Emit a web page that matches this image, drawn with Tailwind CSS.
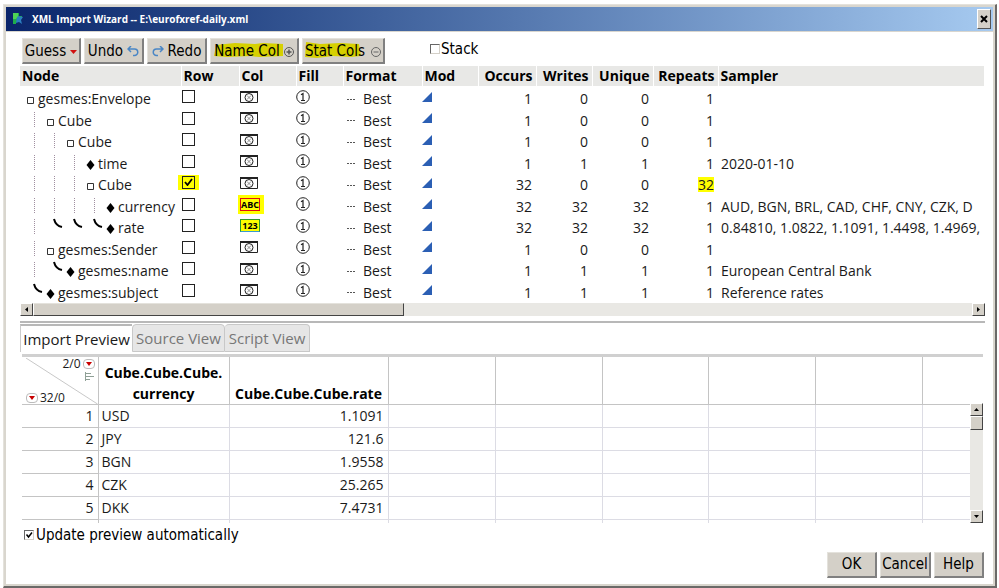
<!DOCTYPE html>
<html lang="en">

<head>
    <meta charset="UTF-8">
    <meta name="viewport" content="width=device-width, initial-scale=1.0">
    <title>XML Import Wizard</title>
    <script src="https://cdn.jsdelivr.net/npm/@tailwindcss/browser@4"></script>
</head>

<body class="bg-white pt-1 pl-[3px] pr-0.5 font-['Open_Sans','Noto_Sans',sans-serif] text-[14px] text-[#1a1a1a]">
    <div class="border-t border-l border-t-[#e4e2dc] border-l-[#e4e2dc] border-r-2 border-b-2 border-r-[#6b6a68] border-b-[#6b6a68]">
        <div class="border-2 border-[#d9d6ce]">
            <header class="h-[25px] flex items-center pl-1.5 pr-0.5 bg-linear-to-r from-[#0a246a] to-[#a6caf0] border-b border-[#d9d6ce]">
                <svg class="w-3 h-4" viewBox="0 0 12 16">
                    <path d="M1 2h6v3h3v3H7v3H4v2H1z" fill="#1fae4b" />
                    <path d="M5 5l6 1-2 3 1 4-3-2-3 1z" fill="#2b7fc0" />
                    <path d="M1 2h5v3l-2 3H1z" fill="#4fd455" />
                </svg>
                <h1 class="ml-2 flex-1 font-bold text-[10px] text-white">XML Import Wizard -- E:\eurofxref-daily.xml</h1>
                <button aria-label="Close" class="w-3.5 h-5 grid place-items-center bg-[#d4d0c8] border border-t-white border-l-white border-r-[#555] border-b-[#555]">
                    <svg class="w-2 h-2" viewBox="0 0 8 8"><path d="M1 1l6 6M7 1l-6 6" stroke="#000" stroke-width="2" /></svg>
                </button>
            </header>

            <main class="pl-3.5 pr-2 pb-1.5">
                <!-- toolbar -->
                <div class="flex items-center gap-[3px] pt-1.5 pl-0.5 font-['DejaVu_Sans_Condensed','DejaVu_Sans',sans-serif] text-[15px] text-black">
                    <button class="w-[59px] h-[26px] pt-0.5 flex items-center justify-center gap-1 whitespace-nowrap bg-[#d4d0c8] border border-t-[#e4e2dc] border-l-[#e4e2dc] border-r-2 border-b-2 border-r-[#808080] border-b-[#808080]">Guess
                        <svg class="w-[7px] h-1" viewBox="0 0 7 4"><path d="M0 0h7L3.5 4z" fill="#d01010" /></svg>
                    </button>
                    <button class="w-[60px] h-[26px] pt-0.5 flex items-center justify-center gap-1 whitespace-nowrap bg-[#d4d0c8] border border-t-[#e4e2dc] border-l-[#e4e2dc] border-r-2 border-b-2 border-r-[#808080] border-b-[#808080]">Undo
                        <svg class="w-3 h-3" viewBox="0 0 12 12" fill="none" stroke="#4a86c5" stroke-width="1.5"><path d="M4 0L1 3l3 3M1 3h6.500a3 3 0 0 1 0 6.500H6" /></svg>
                    </button>
                    <button class="w-[60px] h-[26px] pt-0.5 flex items-center justify-center gap-1 whitespace-nowrap bg-[#d4d0c8] border border-t-[#e4e2dc] border-l-[#e4e2dc] border-r-2 border-b-2 border-r-[#808080] border-b-[#808080]">
                        <svg class="w-3 h-3" viewBox="0 0 12 12" fill="none" stroke="#4a86c5" stroke-width="1.5"><path d="M8 0l3 3-3 3M11 3H4.500a3 3 0 0 0 0 6.500H6" /></svg>
                        Redo</button>
                    <button class="w-[89px] h-[26px] pt-0.5 relative flex items-center justify-center gap-1 whitespace-nowrap bg-[#d4d0c8] border border-t-[#e4e2dc] border-l-[#e4e2dc] border-r-2 border-b-2 border-r-[#808080] border-b-[#808080]">
                        <svg class="absolute left-0.5 top-[3px] w-[72px] h-4" viewBox="0 0 72 16"><path d="M3 3L22 1l20 1 8-1 20 1 0 12-24 1-8-1-24 1-13-1z" fill="#d6d000" /></svg>
                        <span class="relative">Name Col</span>
                        <svg class="w-2.5 h-2.5" viewBox="0 0 10 10" fill="none" stroke="#555"><circle cx="5" cy="5" r="4.500" /><path d="M2.500 5h5M5 2.500v5" stroke-width="1.500" /></svg>
                    </button>
                    <button class="w-[83px] h-[26px] pt-0.5 relative flex items-center justify-center gap-1.5 whitespace-nowrap bg-[#d4d0c8] border border-t-[#e4e2dc] border-l-[#e4e2dc] border-r-2 border-b-2 border-r-[#808080] border-b-[#808080]">
                        <svg class="absolute left-0.5 top-0.5 w-[60px] h-[18px]" viewBox="0 0 60 18"><path d="M1 1l14 2 20-1 19 1 2 12-10 1-18-1-16 2L0 16z" fill="#d6d000" /></svg>
                        <span class="relative">Stat Cols</span>
                        <svg class="w-2.5 h-2.5" viewBox="0 0 10 10" fill="none" stroke="#666"><circle cx="5" cy="5" r="4.500" /><path d="M2.500 5h5" /></svg>
                    </button>
                    <label class="ml-[42px] flex items-center gap-px -mt-1">
                        <input type="checkbox" class="appearance-none w-2.5 h-2.5 bg-white border border-t-[#666] border-l-[#666] border-r-[#d4d0c8] border-b-[#d4d0c8]">Stack
                    </label>
                </div>

                <!-- node tree -->
                <div class="mt-0.5 overflow-hidden">
                    <table class="w-full table-fixed border-collapse whitespace-nowrap">
                        <colgroup>
                            <col class="w-[161px]">
                            <col class="w-[58px]">
                            <col class="w-[57px]">
                            <col class="w-[47px]">
                            <col class="w-[79px]">
                            <col class="w-[56px]">
                            <col class="w-[58px]">
                            <col class="w-[56px]">
                            <col class="w-[61px]">
                            <col class="w-[65px]">
                            <col>
                        </colgroup>
                        <thead>
                            <tr class="h-5 bg-[#e8e8e6] text-black text-left leading-5 *:border-r *:border-white *:p-0 *:pl-0.5 *:pr-[3px] *:font-bold">
                                <th>Node</th>
                                <th>Row</th>
                                <th>Col</th>
                                <th>Fill</th>
                                <th>Format</th>
                                <th>Mod</th>
                                <th class="text-right">Occurs</th>
                                <th class="text-right">Writes</th>
                                <th class="text-right">Unique</th>
                                <th class="text-right">Repeats</th>
                                <th>Sampler</th>
                            </tr>
                            <tr class="h-0.5"></tr>
                        </thead>
                        <tbody id="nodes"></tbody>
                    </table>
                </div>

                <!-- horizontal scroll bar -->
                <div class="h-[13px] flex bg-[#e9e8e4]">
                    <button aria-label="Scroll left" class="w-[13px] grid place-items-center bg-[#d4d0c8] border border-t-white border-l-white border-r-[#444] border-b-[#444]">
                        <svg class="w-[3px] h-[5px]" viewBox="0 0 3 5"><path d="M3 0v5L0 2.500z" /></svg>
                    </button>
                    <div class="w-[371px] bg-[#d4d0c8] border border-t-[#e4e2dc] border-l-white border-r-[#444] border-b-[#444]"></div>
                    <button aria-label="Scroll right" class="ml-auto w-[13px] grid place-items-center bg-[#d4d0c8] border border-t-white border-l-white border-r-[#444] border-b-[#444]">
                        <svg class="w-[3px] h-[5px]" viewBox="0 0 3 5"><path d="M0 0v5l3-2.500z" /></svg>
                    </button>
                </div>
                <div class="mt-[5px] h-0.5 bg-[#b8b8b8]"></div>

                <!-- tabs -->
                <div class="mt-px flex text-[15px] text-[#777]">
                    <button class="w-28 h-7 whitespace-nowrap bg-white text-[#1a1a1a] border-t-2 border-l border-t-[#b8b8b8] border-l-[#ccc]">Import Preview</button>
                    <button class="w-[93px] h-7 whitespace-nowrap bg-[#e6e6e6] border border-[#c8c8c8] rounded-t">Source View</button>
                    <button class="w-[85px] h-7 whitespace-nowrap bg-[#e6e6e6] border border-l-0 border-[#c8c8c8] rounded-t">Script View</button>
                </div>

                <!-- preview grid -->
                <div class="relative mt-0.5 ml-0.5 mr-0.5 border-t-[3px] border-[#d0d0d0]">
                    <table class="w-full table-fixed border-collapse whitespace-nowrap">
                        <colgroup>
                            <col class="w-[76px]">
                            <col class="w-[131px]">
                            <col class="w-[159px]">
                            <col class="w-[107px]">
                            <col class="w-[107px]">
                            <col class="w-[106px]">
                            <col class="w-[107px]">
                            <col class="w-[107px]">
                            <col>
                        </colgroup>
                        <thead>
                            <tr class="h-[47px] text-black align-bottom *:p-0 *:border-r *:border-b *:border-[#c4c4c4] *:last:border-r-0">
                                <td>
                                    <div class="relative h-[46px] text-[12px] leading-3 text-[#1a1a1a] flex flex-col justify-between">
                                        <svg class="absolute inset-0 w-full h-full" viewBox="0 0 76 46" preserveAspectRatio="none"><path d="M4 0l72 46" stroke="#c8c8c8" /></svg>
                                        <div class="relative flex flex-col items-end gap-0.5 pr-[3px]">
                                            <div class="flex items-center gap-0.5">2/0
                                                <button aria-label="Column menu" class="w-3 h-2.5 grid place-items-center bg-white border border-[#bbb] rounded-sm"><svg class="w-1.5 h-1" viewBox="0 0 6 4"><path d="M0 0h6L3 4z" fill="#c80000" /></svg></button>
                                            </div>
                                            <svg class="w-[11px] h-[9px]" viewBox="0 0 11 9" stroke="#8fa096"><path d="M1.500 0v9M2 1.500h5M2 4.500h8M2 7.500h4" /></svg>
                                        </div>
                                        <div class="relative flex items-center gap-0.5 pl-1">
                                            <button aria-label="Row menu" class="w-3 h-2.5 grid place-items-center bg-white border border-[#bbb] rounded-sm"><svg class="w-1.5 h-1" viewBox="0 0 6 4"><path d="M0 0h6L3 4z" fill="#c80000" /></svg></button>
                                            32/0
                                        </div>
                                    </div>
                                </td>
                                <th class="leading-[21px]">Cube.Cube.Cube.<br>currency</th>
                                <th class="leading-[21px]">Cube.Cube.Cube.rate</th>
                                <td></td>
                                <td></td>
                                <td></td>
                                <td></td>
                                <td></td>
                                <td></td>
                            </tr>
                        </thead>
                        <tbody id="preview"></tbody>
                    </table>
                    <!-- vertical scroll bar, over the last column -->
                    <div class="absolute right-0 top-[46px] bottom-0 w-[13px] flex flex-col bg-[#e9e8e4]">
                        <button aria-label="Scroll up" class="h-[13px] grid place-items-center bg-[#d4d0c8] border border-t-white border-l-white border-r-[#444] border-b-[#444]">
                            <svg class="w-[5px] h-[3px]" viewBox="0 0 5 3"><path d="M0 3h5L2.500 0z" /></svg>
                        </button>
                        <div class="h-3.5 bg-[#d4d0c8] border border-t-white border-l-white border-r-[#444] border-b-[#444]"></div>
                        <button aria-label="Scroll down" class="mt-auto h-[13px] grid place-items-center bg-[#d4d0c8] border border-t-white border-l-white border-r-[#444] border-b-[#444]">
                            <svg class="w-[5px] h-[3px]" viewBox="0 0 5 3"><path d="M0 0h5L2.500 3z" /></svg>
                        </button>
                    </div>
                </div>

                <div class="font-['DejaVu_Sans_Condensed','DejaVu_Sans',sans-serif] text-[15px] text-black">
                    <label class="mt-0.5 pl-1 flex items-center gap-0.5 leading-5">
                        <span class="relative flex">
                            <input type="checkbox" checked class="appearance-none w-2.5 h-2.5 bg-white border border-t-[#666] border-l-[#666] border-r-[#d4d0c8] border-b-[#d4d0c8]">
                            <svg class="absolute inset-0 w-2.5 h-2.5 pointer-events-none" viewBox="0 0 10 10"><path d="M2.500 4.500l2 2.500 3.500-4.500" fill="none" stroke="#000" stroke-width="1.500" /></svg>
                        </span>
                        Update preview automatically
                    </label>
                    <div class="mt-[7px] mr-px flex justify-end gap-[3px]">
                        <button class="w-[50px] h-[26px] bg-[#d4d0c8] border border-t-[#e4e2dc] border-l-[#e4e2dc] border-r-2 border-b-2 border-r-[#808080] border-b-[#808080]">OK</button>
                        <button class="w-[51px] h-[26px] bg-[#d4d0c8] border border-t-[#e4e2dc] border-l-[#e4e2dc] border-r-2 border-b-2 border-r-[#808080] border-b-[#808080]">Cancel</button>
                        <button class="w-[50px] h-[26px] bg-[#d4d0c8] border border-t-[#e4e2dc] border-l-[#e4e2dc] border-r-2 border-b-2 border-r-[#808080] border-b-[#808080]">Help</button>
                    </div>
                </div>
            </main>
        </div>
    </div>
</body>

<script>
    // guides: "|" dotted line, "c" closing curve
    const nodes = [
        { guides: '', leaf: false, name: 'gesmes:Envelope', stats: [1, 0, 0, 1], sample: '' },
        { guides: '|', leaf: false, name: 'Cube', stats: [1, 0, 0, 1], sample: '' },
        { guides: '||', leaf: false, name: 'Cube', stats: [1, 0, 0, 1], sample: '' },
        { guides: '|||', leaf: true, name: 'time', stats: [1, 1, 1, 1], sample: '2020-01-10' },
        { guides: '|||', leaf: false, name: 'Cube', row: true, stats: [32, 0, 0, 32], sample: '' },
        { guides: '||||', leaf: true, name: 'currency', col: 'ABC', stats: [32, 32, 32, 1], sample: 'AUD, BGN, BRL, CAD, CHF, CNY, CZK, D' },
        { guides: '|ccc', leaf: true, name: 'rate', col: '123', stats: [32, 32, 32, 1], sample: '0.84810, 1.0822, 1.1091, 1.4498, 1.4969,' },
        { guides: '|', leaf: false, name: 'gesmes:Sender', stats: [1, 0, 0, 1], sample: '' },
        { guides: '|c', leaf: true, name: 'gesmes:name', stats: [1, 1, 1, 1], sample: 'European Central Bank' },
        { guides: 'c', leaf: true, name: 'gesmes:subject', stats: [1, 1, 1, 1], sample: 'Reference rates' },
    ];

    const guideIcons = {
        '|': '<svg class="w-5 h-[21px] shrink-0" viewBox="0 0 20 21"><path d="M8.5 2v15" stroke="#a08fa0" stroke-dasharray="1 1" /></svg>',
        'c': '<svg class="w-5 h-[21px] shrink-0" viewBox="0 0 20 21"><path d="M8 2c1 4 3 7 8 8" fill="none" stroke="#000" stroke-width="2" /></svg>',
    };
    const boxIcon = '<svg class="w-3 h-[21px] shrink-0" viewBox="0 0 12 21"><path d="M1.500 9.500h6v6h-6z" fill="none" stroke="#333" /></svg>';
    const leafIcon = '<svg class="w-3 h-[21px] shrink-0" viewBox="0 0 12 21"><path d="M4.500 7l4 5-4 5-4-5z" /></svg>';

    const omitIcon = `<svg class="w-[18px] h-3" viewBox="0 0 18 12" fill="none" stroke="#222">
        <path d="M.5 1v10.500h17V1" /><path d="M0 1h18" stroke-width="2" />
        <circle cx="9" cy="6.500" r="4" /><path d="M7 4.500l4 4M11 4.500l-4 4" stroke="#777" stroke-width=".8" /></svg>`;
    const colIcons = {
        'ABC': '<button class="relative w-5 h-[13px] border border-[#e01010] bg-[#ffff00] shadow-[1px_0_0_3px_#ffff00] flex items-center justify-center text-[9px] leading-none font-bold font-[\'DejaVu_Sans_Condensed\',sans-serif] text-black">ABC</button>',
        '123': '<button class="relative w-5 h-[13px] border border-[#2e9a2e] border-b-[#3a9ad0] bg-[#ffff00] flex items-center justify-center text-[9px] leading-none font-bold font-[\'DejaVu_Sans_Condensed\',sans-serif] text-black">123</button>',
    };

    const nodesEle = document.getElementById('nodes');
    nodes.forEach((node, i) => {
        const tr = document.createElement('tr');
        tr.setAttribute('class', 'h-[21px] even:h-[22px] leading-[21px] *:p-0');
        const [occurs, writes, unique, repeats] = node.stats;
        tr.innerHTML = `
            <td><div class="flex pl-1.5 h-[21px]">${[...node.guides].map(g => guideIcons[g]).join('')}${node.leaf ? leafIcon : boxIcon}
                <label for="row${i}">${node.name}</label></div></td>
            <td><div class="relative w-[21px] h-[15px] -mt-1 -ml-[3px] flex items-center justify-center ${node.row ? 'bg-[#ffff00]' : ''}">
                <input type="checkbox" id="row${i}" ${node.row ? 'checked' : ''} class="appearance-none w-[13px] h-[13px] border border-[#222] ${node.row ? 'bg-[#ffff00]' : 'bg-white'}">
                ${node.row ? '<svg class="absolute left-1.5 top-[3px] w-[9px] h-2 pointer-events-none" viewBox="0 0 9 8"><path d="M1 4l2.500 3L8 1" fill="none" stroke="#000" stroke-width="1.800" /></svg>' : ''}</div></td>
            <td><div class="h-[19px] -mt-1 pl-px flex items-center">${node.col ? colIcons[node.col] : omitIcon}</div></td>
            <td><svg class="w-3.5 h-3.5 -mt-1" viewBox="0 0 14 14" fill="none" stroke="#222"><circle cx="7" cy="7" r="6.300" /><path d="M5 4.800l2-1.300v7M5 10.500h4" stroke-width="1.200" /></svg></td>
            <td><div class="pl-1 flex items-center gap-2"><svg class="w-2 h-1" viewBox="0 0 8 4"><path d="M0 2.500h2M3 2.500h2M6 2.500h2" stroke="#555" /></svg>Best</div></td>
            <td><svg class="w-2.5 h-2.5 -mt-1" viewBox="0 0 10 10"><path d="M10 0v10H0z" fill="#2b5fb4" /></svg></td>
            <td class="text-right"><div class="pr-1">${occurs}</div></td>
            <td class="text-right"><div class="pr-1">${writes}</div></td>
            <td class="text-right"><div class="pr-1">${unique}</div></td>
            <td class="text-right"><div class="pr-1"><span class="${repeats > 1 ? 'bg-[linear-gradient(#ffff00,#ffff00)] bg-[length:100%_15px] bg-center bg-no-repeat' : ''}">${repeats}</span></div></td>
            <td><div class="pl-[3px] overflow-hidden">${node.sample}</div></td>`;
        nodesEle.append(tr);
    });

    const preview = [['USD', '1.1091'], ['JPY', '121.6'], ['BGN', '1.9558'], ['CZK', '25.265'], ['DKK', '7.4731']];
    const previewEle = document.getElementById('preview');
    preview.forEach((rate, i) => {
        const tr = document.createElement('tr');
        tr.setAttribute('class', 'h-[23px] leading-[22px] *:p-0 *:border-r *:border-b *:border-[#dcdce4] *:last:border-r-0 *:first:border-[#c4c4c4]');
        tr.innerHTML = `<td><div class="text-right pr-1">${i + 1}</div></td>
            <td><div class="pl-[3px]">${rate[0]}</div></td>
            <td><div class="text-right pr-1">${rate[1]}</div></td>
            <td></td><td></td><td></td><td></td><td></td><td></td>`;
        previewEle.append(tr);
    });
    // start of the row below the last full one
    const rest = document.createElement('tr');
    rest.setAttribute('class', 'h-1 *:p-0 *:border-r *:border-[#dcdce4] *:last:border-r-0 *:first:border-[#c4c4c4]');
    rest.innerHTML = '<td></td><td></td><td></td><td></td><td></td><td></td><td></td><td></td><td></td>';
    previewEle.append(rest);
</script>

</html>
